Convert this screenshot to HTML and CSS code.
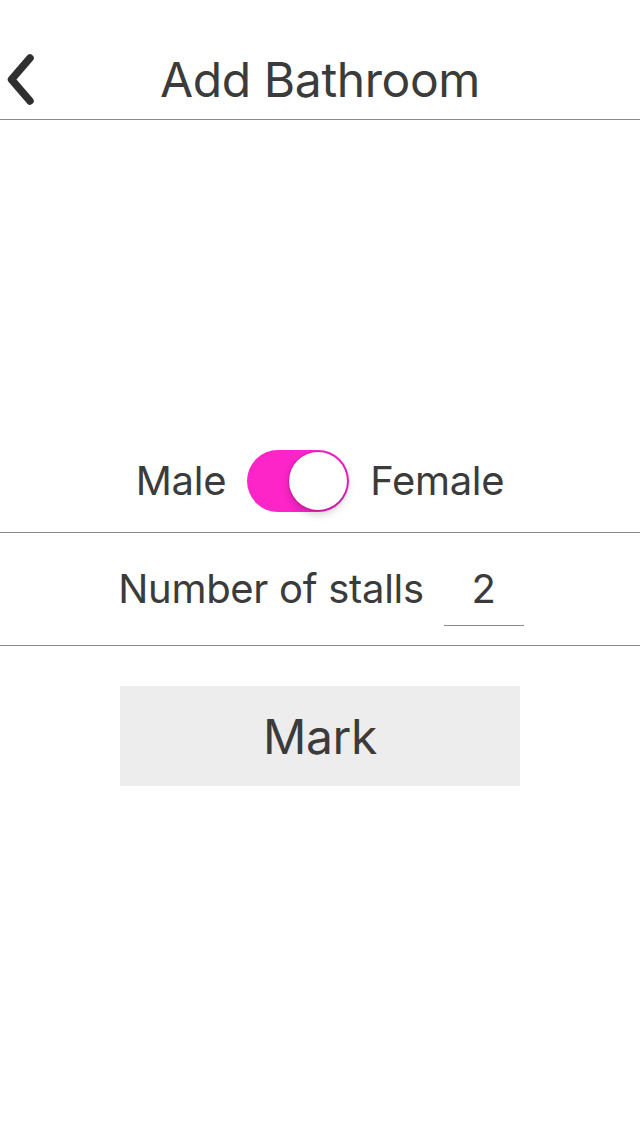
FILE: index.html
```html
<!DOCTYPE html>
<html>
<head>
<meta charset="utf-8">
<link rel="stylesheet" href="styles.css">
</head>
<body>
<div class="screen">
  <header class="nav">
    <button class="back" aria-label="Back">
      <svg width="40" height="60" viewBox="0 0 40 60"><path d="M30 8 L11.5 29.5 L30 51" fill="none" stroke="#2f2f2f" stroke-width="7.5" stroke-linecap="round" stroke-linejoin="round"/></svg>
    </button>
    <h1 class="title">Add Bathroom</h1>
  </header>
  <section class="gender">
    <span class="label">Male</span>
    <div class="switch"><div class="knob"></div></div>
    <span class="label">Female</span>
  </section>
  <section class="stalls">
    <span class="label">Number of stalls</span>
    <span class="field">2</span>
  </section>
  <div class="actions">
    <button class="mark">Mark</button>
  </div>
</div>
</body>
</html>
```
FILE: styles.css
```css
* { box-sizing: border-box; }
html, body { margin: 0; padding: 0; background: #fff; }
body { font-family: Inter, "Noto Sans", sans-serif; color: #3b3b3b; }
.screen { width: 640px; height: 1136px; display: flex; flex-direction: column; }
.nav { position: relative; height: 120px; border-bottom: 1px solid #8a8a8a; display: flex; align-items: center; justify-content: center; }
.back { position: absolute; left: 0; top: 50px; border: 0; background: none; padding: 0; width: 40px; height: 60px; }
.back svg { display: block; }
.title { margin: 0; padding-top: 40px; font-size: 48px; font-weight: 400; letter-spacing: -0.4px; line-height: 1; color: #3b3b3b; }
.gender { margin-top: 330px; height: 83px; padding-bottom: 20px; border-bottom: 1px solid #8a8a8a; display: flex; align-items: center; justify-content: center; gap: 21px; }
.label { font-size: 40px; line-height: 1; letter-spacing: -0.3px; }
.switch { width: 102px; height: 62px; border-radius: 31px; background: #fd24c8; position: relative; }
.knob { position: absolute; right: 2px; top: 2px; width: 58px; height: 58px; border-radius: 50%; background: #fff; box-shadow: 0 4px 8px rgba(0,0,0,0.2), 0 0 0 1px rgba(200,0,150,0.3); }
.stalls { height: 113px; border-bottom: 1px solid #8a8a8a; display: flex; align-items: center; justify-content: center; gap: 20px; padding-left: 2px; }
.field { width: 80px; height: 66px; border-bottom: 1px solid #8a8a8a; font-size: 40px; text-align: center; line-height: 1; display: flex; align-items: center; justify-content: center; margin-top: 8px; padding-bottom: 8px; }
.actions { display: flex; justify-content: center; padding-top: 40px; }
.mark { width: 400px; height: 100px; border: 0; background: #ededed; font-family: Inter, "Noto Sans", sans-serif; font-size: 48px; color: #3b3b3b; letter-spacing: -0.4px; }
```
